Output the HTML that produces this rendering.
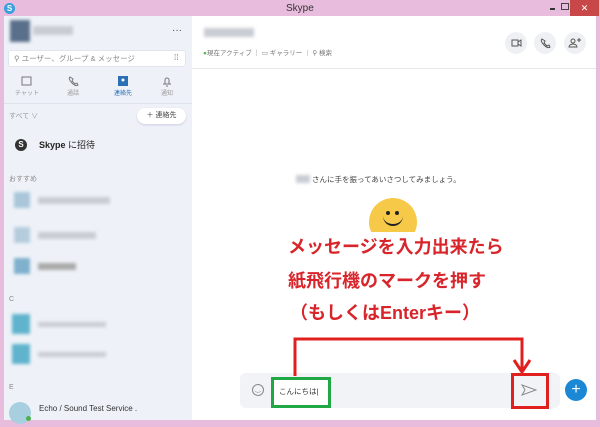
<!DOCTYPE html>
<html><head><meta charset="utf-8"><style>
*{margin:0;padding:0;box-sizing:border-box}
body{width:600px;height:427px;background:#e8bcdc;position:relative;overflow:hidden;font-family:"Liberation Sans","Noto Sans CJK JP",sans-serif;font-size:9px;color:#333}
.a{position:absolute}
.blur{background:#c9ccd3;filter:blur(1.5px)}
.tab{position:absolute;top:88px;width:40px;text-align:center;font-size:6px;color:#999}
</style></head><body>
<div class="a" style="left:4px;top:3px;width:11px;height:11px;border-radius:50%;background:#3aa0df;color:#fff;font-size:8px;text-align:center;line-height:11px;font-weight:bold">S</div>
<div class="a" style="left:286px;top:3px;font-size:10px;color:#333">Skype</div>
<div class="a" style="left:550px;top:8px;width:5px;height:1.5px;background:#333"></div>
<div class="a" style="left:561px;top:3px;width:8px;height:7px;border:1.5px solid #444"></div>
<div class="a" style="left:570px;top:0;width:29px;height:16px;background:#c8484a;color:#fff;text-align:center;font-size:9px;line-height:16px">✕</div>
<!-- sidebar -->
<div class="a" style="left:4px;top:16px;width:188px;height:404px;background:#eef2f8"></div>
<div class="a" style="left:192px;top:16px;width:404px;height:404px;background:#fff"></div>
<div class="a blur" style="left:10px;top:20px;width:20px;height:22px;background:#5a6f8a"></div>
<div class="a blur" style="left:33px;top:26px;width:40px;height:9px"></div>
<div class="a" style="left:172px;top:25px;font-size:10px;color:#444">···</div>
<div class="a" style="left:8px;top:50px;width:178px;height:17px;background:#fff;border-radius:3px;border:1px solid #e2e6ec"></div>
<div class="a" style="left:14px;top:53px;font-size:7.5px;color:#888">⚲ ユーザー、グループ &amp; メッセージ</div>
<div class="a" style="left:174px;top:53px;font-size:8px;color:#666">⁞⁞</div>
<svg class="a" style="left:0;top:75px" width="192" height="14" fill="none" stroke="#777" stroke-width="1">
<rect x="22" y="2" width="9" height="8"/><path d="M70 2q-2 2 2 6t6 2l-1-2-2 1-3-3 1-2z"/>
<rect x="118" y="1" width="10" height="10" fill="#2b6fb6" stroke="none"/><circle cx="123" cy="5" r="1.5" fill="#fff" stroke="none"/>
<path d="M163 9h8M165 9v-4a2 2 0 0 1 4 0v4M166 11h2"/></svg>
<div class="tab" style="left:7px">チャット</div><div class="tab" style="left:53px">通話</div><div class="tab" style="left:103px;color:#2b6fb6">連絡先</div><div class="tab" style="left:147px">通知</div>
<div class="a" style="left:4px;top:103px;width:188px;height:1px;background:#dde2ea"></div>
<div class="a" style="left:9px;top:111px;font-size:7px;color:#999">すべて ∨</div>
<div class="a" style="left:137px;top:108px;width:49px;height:16px;background:#fff;border-radius:8px;box-shadow:0 1px 2px #ccd;font-size:7px;text-align:center;line-height:16px;color:#444">＋ 連絡先</div>
<div class="a" style="left:15px;top:139px;width:12px;height:12px;border-radius:50%;background:#333;color:#fff;font-size:8px;text-align:center;line-height:12px;font-weight:bold">S</div>
<div class="a" style="left:39px;top:138px;font-size:9px;color:#222"><b>Skype</b> に招待</div>
<div class="a" style="left:9px;top:174px;font-size:7px;color:#888">おすすめ</div>
<div class="a blur" style="left:14px;top:192px;width:16px;height:16px;background:#a9c6da"></div><div class="a blur" style="left:38px;top:197px;width:72px;height:7px"></div>
<div class="a blur" style="left:14px;top:227px;width:16px;height:16px;background:#b5ccdd"></div><div class="a blur" style="left:38px;top:232px;width:58px;height:7px"></div>
<div class="a blur" style="left:14px;top:258px;width:16px;height:16px;background:#7fb0cc"></div><div class="a blur" style="left:38px;top:263px;width:38px;height:7px;background:#aaa"></div>
<div class="a" style="left:9px;top:296px;font-size:7px;color:#888">C</div>
<div class="a blur" style="left:12px;top:314px;width:18px;height:20px;background:#5fb3cc"></div><div class="a blur" style="left:38px;top:322px;width:68px;height:5px"></div>
<div class="a blur" style="left:12px;top:344px;width:18px;height:20px;background:#5fb3cc"></div><div class="a blur" style="left:38px;top:352px;width:68px;height:5px"></div>
<div class="a" style="left:9px;top:384px;font-size:7px;color:#888">E</div>
<div class="a" style="left:9px;top:402px;width:22px;height:22px;border-radius:50%;background:#a8cfe0"></div>
<div class="a" style="left:26px;top:416px;width:5px;height:5px;border-radius:50%;background:#4caf50"></div>
<div class="a" style="left:39px;top:404px;font-size:8px;color:#333">Echo / Sound Test Service .</div>
<!-- header -->
<div class="a blur" style="left:204px;top:28px;width:50px;height:9px"></div>
<div class="a" style="left:203px;top:47px;font-size:6.5px;color:#777"><span style="color:#5cb85c">●</span>現在アクティブ ｜ ▭ ギャラリー ｜ ⚲ 検索</div>
<div class="a" style="left:505px;top:32px;width:22px;height:22px;border-radius:50%;background:#eef0f3"></div>
<div class="a" style="left:534px;top:32px;width:22px;height:22px;border-radius:50%;background:#eef0f3"></div>
<div class="a" style="left:564px;top:32px;width:22px;height:22px;border-radius:50%;background:#eef0f3"></div>
<svg class="a" style="left:505px;top:32px" width="82" height="22" fill="none" stroke="#555" stroke-width="1"><rect x="7" y="8" width="6" height="6"/><path d="M13 10l3-2v6l-3-2"/><path d="M37 7q-2 2 2 6t6 2l-1-2-2 1-3-3 1-2z"/><circle cx="68" cy="9" r="2"/><path d="M64 15a4 3 0 0 1 8 0zM74 6v4M72 8h4"/></svg>
<div class="a" style="left:192px;top:68px;width:404px;height:1px;background:#e5e7ea"></div>
<!-- body -->
<div class="a blur" style="left:296px;top:175px;width:14px;height:8px"></div>
<div class="a" style="left:312px;top:174px;font-size:7.5px;color:#444">さんに手を振ってあいさつしてみましょう。</div>
<div class="a" style="left:369px;top:198px;width:48px;height:34px;overflow:hidden"><div style="width:48px;height:48px;border-radius:50%;background:#f7c948;position:relative"><div class="a" style="left:17px;top:13px;width:4px;height:4px;border-radius:50%;background:#222"></div><div class="a" style="left:26px;top:13px;width:4px;height:4px;border-radius:50%;background:#222"></div><div class="a" style="left:14px;top:18px;width:20px;height:10px;border-bottom:2px solid #222;border-radius:0 0 10px 10px"></div></div></div>
<div class="a" style="left:288px;top:236px;font-size:18px;font-weight:bold;color:#d8252b;line-height:22px">メッセージを入力出来たら</div>
<div class="a" style="left:288px;top:270px;font-size:18px;font-weight:bold;color:#d8252b;line-height:22px">紙飛行機のマークを押す</div>
<div class="a" style="left:290px;top:302px;font-size:18px;font-weight:bold;color:#d8252b;line-height:22px">（もしくはEnterキー）</div>
<!-- input -->
<div class="a" style="left:240px;top:373px;width:320px;height:35px;background:#f1f3f6;border-radius:6px"></div>
<div class="a" style="left:252px;top:384px;width:12px;height:12px;border-radius:50%;border:1px solid #888;font-size:7px;text-align:center;line-height:10px;color:#888">‿</div>
<div class="a" style="left:271px;top:377px;width:60px;height:31px;border:3px solid #1fa843;background:#fff"></div>
<div class="a" style="left:279px;top:386px;font-size:7.5px;color:#333">こんにちは|</div>
<div class="a" style="left:511px;top:373px;width:38px;height:36px;border:3px solid #e0201f"></div>
<svg class="a" style="left:521px;top:384px" width="16" height="12" fill="none" stroke="#888" stroke-width="1"><path d="M1 1l14 5-14 5 3-5z"/></svg>
<div class="a" style="left:565px;top:379px;width:22px;height:22px;border-radius:50%;background:#1a88d4;color:#fff;font-size:16px;text-align:center;line-height:22px">+</div>
<svg class="a" style="left:0;top:0" width="600" height="427" fill="none" stroke="#e0201f" stroke-width="3"><path d="M295 376V339H522V370"/><path d="M514 360l8 12 8-12" stroke-linejoin="miter"/></svg>
</body></html>
